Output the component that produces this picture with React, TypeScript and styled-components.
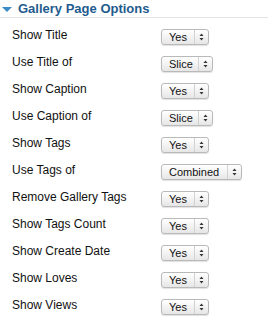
import React from "react";
import styled, { createGlobalStyle } from "styled-components";

const Global = createGlobalStyle`
  html, body { margin: 0; padding: 0; background: #fff; }
  body { font-family: "Liberation Sans", Arial, sans-serif; }
`;

const Panel = styled.div`
  width: 268px;
  height: 322px;
  overflow: hidden;
  background: #fff;
`;

const Header = styled.div`
  display: flex;
  align-items: center;
  height: 17px;
  border-bottom: 1px solid #e2e2e2;
  padding-left: 2px;
  gap: 6px;
`;

const Arrow = styled.span`
  width: 0;
  height: 0;
  border-left: 5px solid transparent;
  border-right: 5px solid transparent;
  border-top: 5px solid #3b8cc6;
  margin-top: 1px;
`;

const Title = styled.h2`
  margin: 0;
  font-size: 13px;
  font-weight: bold;
  color: #1f5b8e;
  line-height: 15px;
`;

const List = styled.div`
  display: grid;
  grid-template-columns: 149px auto;
  grid-auto-rows: 27px;
  padding: 5px 0 0 12px;
`;

const Label = styled.div`
  font-size: 12px;
  color: #111;
  display: flex;
  align-items: center;
  padding-bottom: 4px;
`;

const Cell = styled.div`
  display: flex;
  align-items: center;
`;

const Select = styled.div<{ $w: number }>`
  box-sizing: border-box;
  width: ${(p) => p.$w}px;
  height: 16px;
  display: flex;
  align-items: stretch;
  border: 1px solid #b9b9b9;
  border-radius: 3px;
  background: linear-gradient(#ffffff, #f3f3f3 50%, #e6e6e6);
  box-shadow: 0 1px 1px rgba(0, 0, 0, 0.12);
  font-size: 11px;
  color: #111;
`;

const Value = styled.span`
  flex: 1;
  display: flex;
  align-items: center;
  padding-left: 7px;
  line-height: 14px;
`;

const Stepper = styled.span`
  width: 13px;
  border-left: 1px solid #d2d2d2;
  display: flex;
  align-items: center;
  justify-content: center;
`;

const Arrows = () => (
  <svg width="5" height="8" viewBox="0 0 5 8">
    <path d="M2.5 0.5 L4.5 3 L0.5 3 Z" fill="#333" />
    <path d="M2.5 7.5 L4.5 5 L0.5 5 Z" fill="#333" />
  </svg>
);

const rows: [string, string, number][] = [
  ["Show Title", "Yes", 48],
  ["Use Title of", "Slice", 52],
  ["Show Caption", "Yes", 48],
  ["Use Caption of", "Slice", 52],
  ["Show Tags", "Yes", 48],
  ["Use Tags of", "Combined", 81],
  ["Remove Gallery Tags", "Yes", 48],
  ["Show Tags Count", "Yes", 48],
  ["Show Create Date", "Yes", 48],
  ["Show Loves", "Yes", 48],
  ["Show Views", "Yes", 48],
];

export default function App() {
  return (
    <>
      <Global />
      <Panel>
        <Header>
          <Arrow />
          <Title>Gallery Page Options</Title>
        </Header>
        <List>
          {rows.map(([label, value, w]) => (
            <React.Fragment key={label}>
              <Label>{label}</Label>
              <Cell>
                <Select $w={w}>
                  <Value>{value}</Value>
                  <Stepper>
                    <Arrows />
                  </Stepper>
                </Select>
              </Cell>
            </React.Fragment>
          ))}
        </List>
      </Panel>
    </>
  );
}
